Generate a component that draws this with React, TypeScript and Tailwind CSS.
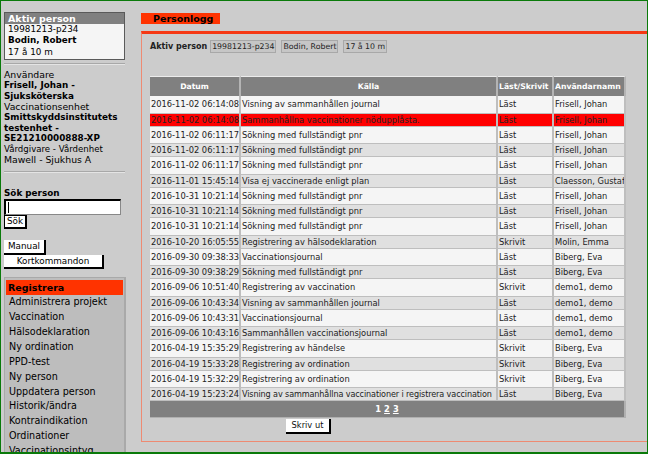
import React from 'react';

const font = { fontFamily: '"DejaVu Sans", Verdana, sans-serif' };

const rows: [string, string, string, string][] = [
  ['2016-11-02 06:14:08', 'Visning av sammanhållen journal', 'Läst', 'Frisell, Johan'],
  ['2016-11-02 06:14:08', 'Sammanhållna vaccinationer nödupplåsta.', 'Läst', 'Frisell, Johan'],
  ['2016-11-02 06:11:17', 'Sökning med fullständigt pnr', 'Läst', 'Frisell, Johan'],
  ['2016-11-02 06:11:17', 'Sökning med fullständigt pnr', 'Läst', 'Frisell, Johan'],
  ['2016-11-02 06:11:17', 'Sökning med fullständigt pnr', 'Läst', 'Frisell, Johan'],
  ['2016-11-01 15:45:14', 'Visa ej vaccinerade enligt plan', 'Läst', 'Claesson, Gustaf'],
  ['2016-10-31 10:21:14', 'Sökning med fullständigt pnr', 'Läst', 'Frisell, Johan'],
  ['2016-10-31 10:21:14', 'Sökning med fullständigt pnr', 'Läst', 'Frisell, Johan'],
  ['2016-10-31 10:21:14', 'Sökning med fullständigt pnr', 'Läst', 'Frisell, Johan'],
  ['2016-10-20 16:05:55', 'Registrering av hälsodeklaration', 'Skrivit', 'Molin, Emma'],
  ['2016-09-30 09:38:33', 'Vaccinationsjournal', 'Läst', 'Biberg, Eva'],
  ['2016-09-30 09:38:29', 'Sökning med fullständigt pnr', 'Läst', 'Biberg, Eva'],
  ['2016-09-06 10:51:40', 'Registrering av vaccination', 'Skrivit', 'demo1, demo'],
  ['2016-09-06 10:43:34', 'Visning av sammanhållen journal', 'Läst', 'demo1, demo'],
  ['2016-09-06 10:43:31', 'Vaccinationsjournal', 'Läst', 'demo1, demo'],
  ['2016-09-06 10:43:16', 'Sammanhållen vaccinationsjournal', 'Läst', 'demo1, demo'],
  ['2016-04-19 15:35:29', 'Registrering av händelse', 'Skrivit', 'Biberg, Eva'],
  ['2016-04-19 15:33:28', 'Registrering av ordination', 'Skrivit', 'Biberg, Eva'],
  ['2016-04-19 15:32:29', 'Registrering av ordination', 'Skrivit', 'Biberg, Eva'],
  ['2016-04-19 15:23:24', 'Visning av sammanhållna vaccinationer i registrera vaccination', 'Läst', 'Biberg, Eva'],
];

const menu = [
  'Administrera projekt',
  'Vaccination',
  'Hälsodeklaration',
  'Ny ordination',
  'PPD-test',
  'Ny person',
  'Uppdatera person',
  'Historik/ändra',
  'Kontraindikation',
  'Ordinationer',
  'Vaccinationsintyg',
];

function Sidebar() {
  return (
    <div className="w-[125px] shrink-0 flex flex-col pl-[3px] text-black">
      {/* aktiv person */}
      <div className="mt-[11px] w-[121px] border border-[#5a5a5a]">
        <div className="h-[11px] bg-[#808080] text-white font-bold text-[9.5px] leading-[11px] pl-[3px]">Aktiv person</div>
        <div className="bg-[#f5f5f5] text-[8.8px] leading-[11.3px] pl-[3px] pb-[1px]">
          <div>19981213-p234</div>
          <div className="font-bold">Bodin, Robert</div>
          <div>17 å 10 m</div>
        </div>
      </div>
      <div className="mt-[3px] w-[121px] border-t border-b border-t-[#a8a8a8] border-b-[#e4e4e4]" />

      <div className="mt-[5px] text-[9.3px] leading-[10.6px]">
        <div>Användare</div>
        <div className="font-bold text-[8.8px]">Frisell, Johan -<br />Sjuksköterska</div>
        <div>Vaccinationsenhet</div>
        <div className="font-bold text-[8.8px]">Smittskyddsinstitutets<br />testenhet -<br />SE21210000888-XP</div>
        <div className="text-[8.6px]">Vårdgivare - Vårdenhet</div>
        <div>Mawell - Sjukhus A</div>
      </div>
      <div className="mt-[6px] w-[121px] border-t border-b border-t-[#a8a8a8] border-b-[#e4e4e4]" />

      <div className="mt-[15px] font-bold text-[8.8px] leading-[10px]">Sök person</div>
      <div className="mt-[1px] w-[117px] h-[16px] bg-white border-2 border-black border-r border-b border-r-[#888] border-b-[#888] flex items-center pl-[2px]">
        <div className="w-px h-[11px] bg-black" />
      </div>
      <div className="w-[23px] h-[14px] bg-white border border-black border-r-2 border-b-2 text-[8.8px] leading-[11px] text-center">Sök</div>

      <div className="mt-[11px] w-[42px] h-[15px] bg-white border-r-2 border-b-2 border-black text-[8.8px] leading-[13px] text-center">Manual</div>
      <div className="w-[100px] h-[14px] bg-white border-r-2 border-b-2 border-black text-[8.8px] leading-[12px] text-center">Kortkommandon</div>

      <div className="mt-[8px] w-[122px] flex-1 bg-[#bdbdbd] border-t border-l border-r-2 border-[#a9a9a9] pt-[2px] pl-[1px] overflow-hidden">
        <div className="w-[117px] h-[15px] bg-[#ff3300] font-bold text-[9.5px] leading-[15px] pl-[2px]">Registrera</div>
        <div className="pl-[3px] text-[9.6px]">
          {menu.map((m) => (
            <div key={m} className="h-[14.9px] leading-[14.9px]">{m}</div>
          ))}
        </div>
      </div>
    </div>
  );
}

function Main() {
  return (
    <div className="flex-1 flex flex-col pl-[15px]">
      <div className="mt-[12px] w-[79px] h-[11px] bg-[#ff3300] font-bold text-[9.5px] leading-[11px] pl-[12px] text-black">Personlogg</div>
      <div className="mt-[7px] h-[411px] border-t-[3px] border-t-[#f53814] border-l border-b border-l-[#ee8a72] border-b-[#ee8a72] pl-[8px] flex flex-col">
        <div className="mt-[6px] flex items-center text-[7.8px] text-[#222]">
          <span className="font-bold text-[8px] mr-[3px]">Aktiv person</span>
          <span className="h-[13px] leading-[12px] px-[1px] bg-[#c6c6c6] border border-[#a8a8a8] mr-[5px]">19981213-p234</span>
          <span className="h-[13px] leading-[12px] px-[1px] bg-[#c6c6c6] border border-[#a8a8a8] mr-[5px]">Bodin, Robert</span>
          <span className="h-[13px] leading-[12px] px-[1px] bg-[#c6c6c6] border border-[#a8a8a8]">17 å 10 m</span>
        </div>

        <table className="mt-[23px] w-[476px] table-fixed border-separate border-spacing-0 text-[8.3px] text-[#222]">
          <colgroup>
            <col className="w-[91px]" />
            <col className="w-[257px]" />
            <col className="w-[56px]" />
            <col className="w-[72px]" />
          </colgroup>
          <thead>
            <tr className="h-[20px] bg-[#808080] text-white font-bold text-[7.7px]">
              <th className="border-t border-t-[#ececec] border-r-2 border-r-[#b4b4b4] text-center">Datum</th>
              <th className="border-t border-t-[#ececec] border-r-2 border-r-[#b4b4b4] text-center">Källa</th>
              <th className="border-t border-t-[#ececec] border-r-2 border-r-[#b4b4b4] text-left pl-[1px] whitespace-nowrap overflow-hidden">Läst/Skrivit</th>
              <th className="border-t border-t-[#ececec] border-r-2 border-r-[#b4b4b4] text-left pl-[1px] whitespace-nowrap overflow-hidden">Användarnamn</th>
            </tr>
          </thead>
          <tbody>
            {rows.map((r, i) => {
              const red = i === 1;
              const odd = i % 2 === 0;
              const bg = red ? 'bg-[#ff0000]' : odd ? 'bg-[#f5f5f5]' : 'bg-[#e0e0e0]';
              const h = odd ? 'h-[17.5px]' : 'h-[13px]';
              return (
                <tr key={i} className={`${bg} ${h}`}>
                  {r.map((c, j) => (
                    <td
                      key={j}
                      className={`border-r-2 border-b border-[#bebebe] pl-[1px] whitespace-nowrap overflow-hidden leading-[10px] ${
                        j === 1 && c.length > 50 ? 'text-[8.1px] tracking-[-0.12px]' : ''
                      }`}
                    >
                      {c}
                    </td>
                  ))}
                </tr>
              );
            })}
          </tbody>
        </table>
        <div className="w-[476px] h-[17px] bg-[#808080] border-r-2 border-b border-[#b0b0b0] flex items-center justify-center gap-[3px] text-white font-bold text-[8.3px] leading-[12px]">
          <span>1</span>
          <span className="underline">2</span>
          <span className="underline">3</span>
        </div>
        <div className="mt-[1px] ml-[136px] w-[45px] h-[15px] bg-white border-r-2 border-b-2 border-black text-[8.3px] leading-[13px] text-center text-[#111]">Skriv ut</div>
      </div>
    </div>
  );
}

export default function App() {
  return (
    <div style={font} className="w-[648px] h-[454px] bg-[#cccccc] border border-b-2 border-[#0a7a0a] flex overflow-hidden">
      <Sidebar />
      <Main />
    </div>
  );
}
